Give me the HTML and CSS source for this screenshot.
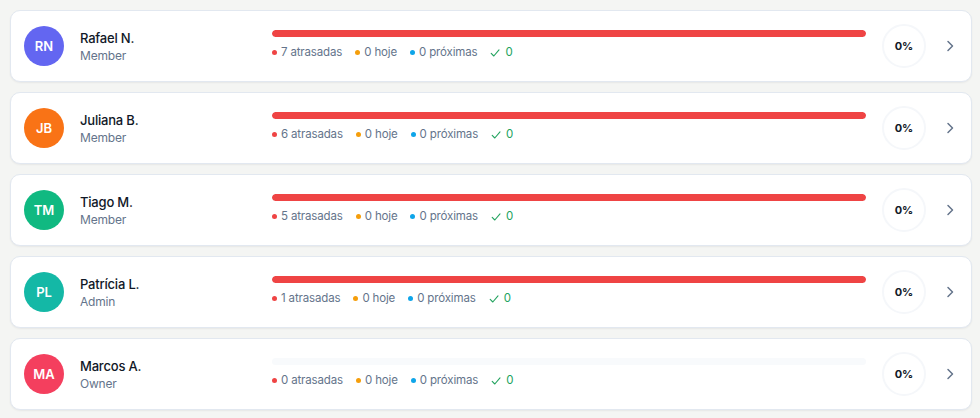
FILE: index.html
```html
<!DOCTYPE html>
<html lang="pt">
<head>
    <meta charset="UTF-8">
    <meta name="viewport" content="width=device-width, initial-scale=1.0">
    <title>Equipe</title>
    <link rel="stylesheet" href="styles.css">
</head>
<body>
    <div class="member-list">
        <div class="member-card">
            <div class="avatar avatar-indigo">RN</div>
            <div class="member-info">
                <span class="member-name">Rafael N.</span>
                <span class="member-role">Member</span>
            </div>
            <div class="member-progress">
                <div class="bar"><div class="bar-fill" style="width: 100%"></div></div>
                <div class="legend">
                    <span class="legend-item"><i class="dot dot-red"></i>7 atrasadas</span>
                    <span class="legend-item"><i class="dot dot-amber"></i>0 hoje</span>
                    <span class="legend-item"><i class="dot dot-sky"></i>0 próximas</span>
                    <span class="legend-item done"><svg class="check" viewBox="0 0 10 10" width="10" height="10"><path d="M1.2 5.4l2.6 2.6L9 1.8" fill="none" stroke="currentColor" stroke-width="1.1" stroke-linecap="round" stroke-linejoin="round"/></svg>0</span>
                </div>
            </div>
            <div class="percent">0%</div>
            <svg class="chevron" viewBox="0 0 16 16" width="16" height="16"><path d="M6 3.5l4.5 4.5L6 12.5" fill="none" stroke="currentColor" stroke-width="1.5" stroke-linecap="round" stroke-linejoin="round"/></svg>
        </div>

        <div class="member-card">
            <div class="avatar avatar-orange">JB</div>
            <div class="member-info">
                <span class="member-name">Juliana B.</span>
                <span class="member-role">Member</span>
            </div>
            <div class="member-progress">
                <div class="bar"><div class="bar-fill" style="width: 100%"></div></div>
                <div class="legend">
                    <span class="legend-item"><i class="dot dot-red"></i>6 atrasadas</span>
                    <span class="legend-item"><i class="dot dot-amber"></i>0 hoje</span>
                    <span class="legend-item"><i class="dot dot-sky"></i>0 próximas</span>
                    <span class="legend-item done"><svg class="check" viewBox="0 0 10 10" width="10" height="10"><path d="M1.2 5.4l2.6 2.6L9 1.8" fill="none" stroke="currentColor" stroke-width="1.1" stroke-linecap="round" stroke-linejoin="round"/></svg>0</span>
                </div>
            </div>
            <div class="percent">0%</div>
            <svg class="chevron" viewBox="0 0 16 16" width="16" height="16"><path d="M6 3.5l4.5 4.5L6 12.5" fill="none" stroke="currentColor" stroke-width="1.5" stroke-linecap="round" stroke-linejoin="round"/></svg>
        </div>

        <div class="member-card">
            <div class="avatar avatar-emerald">TM</div>
            <div class="member-info">
                <span class="member-name">Tiago M.</span>
                <span class="member-role">Member</span>
            </div>
            <div class="member-progress">
                <div class="bar"><div class="bar-fill" style="width: 100%"></div></div>
                <div class="legend">
                    <span class="legend-item"><i class="dot dot-red"></i>5 atrasadas</span>
                    <span class="legend-item"><i class="dot dot-amber"></i>0 hoje</span>
                    <span class="legend-item"><i class="dot dot-sky"></i>0 próximas</span>
                    <span class="legend-item done"><svg class="check" viewBox="0 0 10 10" width="10" height="10"><path d="M1.2 5.4l2.6 2.6L9 1.8" fill="none" stroke="currentColor" stroke-width="1.1" stroke-linecap="round" stroke-linejoin="round"/></svg>0</span>
                </div>
            </div>
            <div class="percent">0%</div>
            <svg class="chevron" viewBox="0 0 16 16" width="16" height="16"><path d="M6 3.5l4.5 4.5L6 12.5" fill="none" stroke="currentColor" stroke-width="1.5" stroke-linecap="round" stroke-linejoin="round"/></svg>
        </div>

        <div class="member-card">
            <div class="avatar avatar-teal">PL</div>
            <div class="member-info">
                <span class="member-name">Patrícia L.</span>
                <span class="member-role">Admin</span>
            </div>
            <div class="member-progress">
                <div class="bar"><div class="bar-fill" style="width: 100%"></div></div>
                <div class="legend">
                    <span class="legend-item"><i class="dot dot-red"></i>1 atrasadas</span>
                    <span class="legend-item"><i class="dot dot-amber"></i>0 hoje</span>
                    <span class="legend-item"><i class="dot dot-sky"></i>0 próximas</span>
                    <span class="legend-item done"><svg class="check" viewBox="0 0 10 10" width="10" height="10"><path d="M1.2 5.4l2.6 2.6L9 1.8" fill="none" stroke="currentColor" stroke-width="1.1" stroke-linecap="round" stroke-linejoin="round"/></svg>0</span>
                </div>
            </div>
            <div class="percent">0%</div>
            <svg class="chevron" viewBox="0 0 16 16" width="16" height="16"><path d="M6 3.5l4.5 4.5L6 12.5" fill="none" stroke="currentColor" stroke-width="1.5" stroke-linecap="round" stroke-linejoin="round"/></svg>
        </div>

        <div class="member-card">
            <div class="avatar avatar-rose">MA</div>
            <div class="member-info">
                <span class="member-name">Marcos A.</span>
                <span class="member-role">Owner</span>
            </div>
            <div class="member-progress">
                <div class="bar"><div class="bar-fill" style="width: 0%"></div></div>
                <div class="legend">
                    <span class="legend-item"><i class="dot dot-red"></i>0 atrasadas</span>
                    <span class="legend-item"><i class="dot dot-amber"></i>0 hoje</span>
                    <span class="legend-item"><i class="dot dot-sky"></i>0 próximas</span>
                    <span class="legend-item done"><svg class="check" viewBox="0 0 10 10" width="10" height="10"><path d="M1.2 5.4l2.6 2.6L9 1.8" fill="none" stroke="currentColor" stroke-width="1.1" stroke-linecap="round" stroke-linejoin="round"/></svg>0</span>
                </div>
            </div>
            <div class="percent">0%</div>
            <svg class="chevron" viewBox="0 0 16 16" width="16" height="16"><path d="M6 3.5l4.5 4.5L6 12.5" fill="none" stroke="currentColor" stroke-width="1.5" stroke-linecap="round" stroke-linejoin="round"/></svg>
        </div>
    </div>
</body>
</html>
```

FILE: styles.css
```css
body {
    margin: 0;
    background-color: #f4f5f3;
    font-family: Inter, "Noto Sans", sans-serif;
    color: #111827;
}
.member-list {
    display: flex;
    flex-direction: column;
    gap: 10px;
    padding: 10px 8px 10px 10px;
}
.member-card {
    display: flex;
    align-items: center;
    gap: 16px;
    height: 72px;
    box-sizing: border-box;
    padding: 0 13px;
    background-color: #fff;
    border: 1px solid #e2e8f0;
    border-radius: 10px;
    box-shadow: 0 1px 2px rgba(15, 23, 42, 0.06);
}
.avatar {
    width: 40px;
    height: 40px;
    flex-shrink: 0;
    border-radius: 50%;
    display: flex;
    align-items: center;
    justify-content: center;
    color: #fff;
    font-size: 13px;
    font-weight: 600;
}
.avatar-indigo { background-color: #6366f1; }
.avatar-orange { background-color: #f97316; }
.avatar-emerald { background-color: #10b981; }
.avatar-teal { background-color: #14b8a6; }
.avatar-rose { background-color: #f43f5e; }

.member-info {
    width: 176px;
    flex-shrink: 0;
    display: flex;
    flex-direction: column;
    margin-top: 1px;
}
.member-name {
    font-size: 13px;
    line-height: 17px;
    font-weight: 500;
    letter-spacing: -0.2px;
    color: #111827;
}
.member-role {
    font-size: 12px;
    line-height: 17px;
    letter-spacing: -0.2px;
    color: #64748b;
}
.member-progress {
    flex: 1;
    display: flex;
    flex-direction: column;
    gap: 8px;
    margin-bottom: 2px;
}
.bar {
    height: 7px;
    border-radius: 999px;
    background-color: #f8fafc;
    overflow: hidden;
}
.bar-fill {
    height: 100%;
    border-radius: 999px;
    background-color: #ef4444;
}
.legend {
    display: flex;
    gap: 13px;
    font-size: 11.5px;
    line-height: 15px;
    letter-spacing: -0.15px;
    color: #64748b;
}
.legend-item {
    display: flex;
    align-items: center;
    gap: 4px;
}
.dot {
    width: 5px;
    height: 5px;
    border-radius: 50%;
}
.dot-red { background-color: #ef4444; }
.dot-amber { background-color: #f59e0b; }
.dot-sky { background-color: #0ea5e9; }
.done {
    color: #22a35e;
}
.check {
    margin-right: 1px;
}
.percent {
    width: 40px;
    height: 40px;
    flex-shrink: 0;
    border: 2px solid #f5f7fa;
    border-radius: 50%;
    display: flex;
    align-items: center;
    justify-content: center;
    font-size: 11px;
    font-weight: 700;
    color: #111827;
}
.chevron {
    color: #64748b;
    flex-shrink: 0;
}
```
